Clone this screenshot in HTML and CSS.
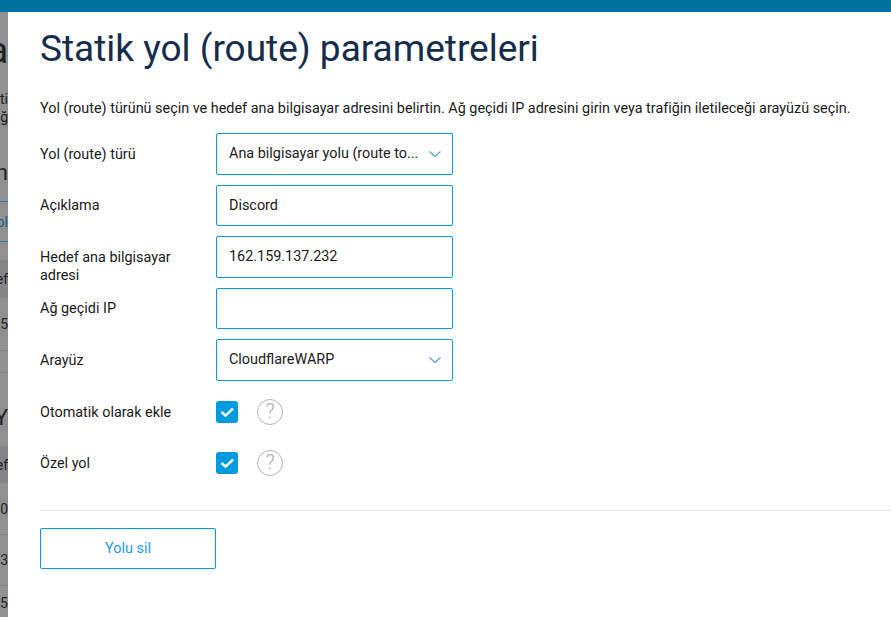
FILE: index.html
```html
<!DOCTYPE html>
<html lang="tr">
<head>
    <meta charset="UTF-8">
    <meta name="viewport" content="width=device-width, initial-scale=1.0">
    <title>Statik yol (route) parametreleri</title>
    <link rel="stylesheet" href="styles.css">
</head>
<body>
    <div class="topbar"></div>
    <div class="page">
        <div class="backdrop">
            <div class="bg-row bg-r1 big"><span>a</span></div>
            <div class="bg-row bg-r2"><span>ti</span></div>
            <div class="bg-row bg-r3"><span>ğ</span></div>
            <div class="bg-row bg-r4 mid"><span>n</span></div>
            <div class="bg-row bg-r5 link"><span>ol</span></div>
            <div class="bg-row bg-r6 shade"><span>ef</span></div>
            <div class="bg-row bg-r7 line"><span><b>l</b> 5</span></div>
            <div class="bg-row bg-r8 line"></div>
            <div class="bg-row bg-r9 mid"><span>Y</span></div>
            <div class="bg-row bg-r10 shade"><span>ef</span></div>
            <div class="bg-row bg-r11 line"><span>.0</span></div>
            <div class="bg-row bg-r12 line"><span>3</span></div>
            <div class="bg-row bg-r13"><span>55</span></div>
        </div>
        <main class="panel">
            <h1>Statik yol (route) parametreleri</h1>
            <p class="intro">Yol (route) türünü seçin ve hedef ana bilgisayar adresini belirtin. Ağ geçidi IP adresini girin veya trafiğin iletileceği arayüzü seçin.</p>

            <div class="form-row">
                <label>Yol (route) türü</label>
                <div class="field select">
                    <span class="value">Ana bilgisayar yolu (route to...</span>
                    <svg class="chevron" viewBox="0 0 12 6"><path d="M.5.5L6 5.5 11.5.5"/></svg>
                </div>
            </div>
            <div class="form-row">
                <label>Açıklama</label>
                <div class="field"><span class="value">Discord</span></div>
            </div>
            <div class="form-row">
                <label>Hedef ana bilgisayar adresi</label>
                <div class="field"><span class="value">162.159.137.232</span></div>
            </div>
            <div class="form-row">
                <label>Ağ geçidi IP</label>
                <div class="field"></div>
            </div>
            <div class="form-row">
                <label>Arayüz</label>
                <div class="field select">
                    <span class="value">CloudflareWARP</span>
                    <svg class="chevron" viewBox="0 0 12 6"><path d="M.5.5L6 5.5 11.5.5"/></svg>
                </div>
            </div>
            <div class="check-row first">
                <label>Otomatik olarak ekle</label>
                <span class="checkbox"><svg viewBox="0 0 22 22"><path d="M5.5 11l4 3.6 7.5-7"/></svg></span>
                <span class="help">?</span>
            </div>
            <div class="check-row">
                <label>Özel yol</label>
                <span class="checkbox"><svg viewBox="0 0 22 22"><path d="M5.5 11l4 3.6 7.5-7"/></svg></span>
                <span class="help">?</span>
            </div>

            <div class="actions">
                <button>Yolu sil</button>
            </div>
        </main>
    </div>
</body>
</html>
```

FILE: styles.css
```css
* {
    box-sizing: border-box;
}

html, body {
    height: 100%;
}

body {
    margin: 0;
    overflow: hidden;
    display: flex;
    flex-direction: column;
    font-family: Roboto, "Liberation Sans", sans-serif;
    font-size: 14.4px;
    color: #1a1a1a;
    background: #fff;
}

.topbar {
    height: 12px;
    flex: none;
    background: #0070a0;
}

.page {
    flex: 1;
    display: flex;
    min-height: 0;
}

/* the page behind the dialog, dimmed; only its right edge shows */
.backdrop {
    width: 8px;
    flex: none;
    overflow: hidden;
    background: #909092;
    color: #1d1f26;
    font-size: 14px;
}

.bg-row {
    display: flex;
    align-items: center;
    justify-content: flex-end;
    white-space: nowrap;
}

.bg-row span {
    flex: none;
}

.bg-row b {
    font-weight: 400;
    color: #0f5f8a;
}

.big { font-size: 36px; }
.mid { font-size: 22px; }
.link { color: #0f5f8a; }
.shade { background: #858589; }
.line { border-bottom: 1px solid #808082; }

.bg-r1 { height: 78px; }
.bg-r2 { height: 18px; }
.bg-r3 { height: 18px; }
.bg-r4 { height: 44px; margin-top: 24px; }
.bg-r5 { height: 41px; margin-top: 7px; border-top: 1px solid #2a7fa8; border-bottom: 1px solid #2a7fa8; }
.bg-r6 { height: 38px; margin-top: 18px; }
.bg-r7 { height: 53px; }
.bg-r8 { height: 22px; }
.bg-r9 { height: 48px; margin-top: 20px; }
.bg-r10 { height: 37px; margin-top: 5px; }
.bg-r11 { height: 52px; }
.bg-r12 { height: 51px; }
.bg-r13 { height: 32px; margin-top: 9px; align-items: flex-start; }

.panel {
    flex: 1;
    min-width: 0;
    padding: 12px 0 0 32px;
}

h1 {
    margin: 0;
    font-size: 37px;
    font-weight: 400;
    line-height: 50px;
    color: #152c4c;
}

.intro {
    margin: 25px 0 14px;
    line-height: 20px;
    white-space: nowrap;
}

.form-row {
    display: flex;
    align-items: flex-start;
    height: 41.5px;
    margin-bottom: 10px;
}

label {
    width: 176px;
    flex: none;
    padding-right: 20px;
    line-height: 18px;
}

.form-row label {
    padding-top: 12.5px;
}

.field {
    width: 237px;
    height: 41.5px;
    display: flex;
    align-items: center;
    justify-content: space-between;
    padding: 0 11px 0 12px;
    border: 1px solid #009ade;
    border-radius: 2px;
}

.chevron {
    width: 12px;
    height: 6px;
    flex: none;
    fill: none;
    stroke: #5fa8d8;
    stroke-width: 1.4;
}

.check-row {
    display: flex;
    align-items: center;
    height: 26px;
    margin-bottom: 25.5px;
}

.check-row label {
    padding-top: 2px;
}

.check-row.first {
    margin-top: 18px;
}

.checkbox {
    width: 22px;
    height: 22px;
    flex: none;
    border-radius: 3px;
    background: #009ade;
}

.checkbox svg {
    display: block;
    fill: none;
    stroke: #fff;
    stroke-width: 2.5;
}

.help {
    width: 26px;
    height: 26px;
    flex: none;
    margin-left: 19px;
    border: 1.3px solid #b4b4b4;
    border-radius: 50%;
    color: #a8a8a8;
    font-size: 20px;
    font-weight: 300;
    line-height: 23px;
    text-align: center;
}

.actions {
    margin-top: 34px;
    padding-top: 17px;
    border-top: 1px solid #e8e8e8;
}

button {
    display: block;
    width: 176px;
    height: 41px;
    border: 1px solid #009ade;
    border-radius: 2px;
    background: #fff;
    color: #1f9be0;
    font-family: inherit;
    font-size: 14.4px;
}
```
